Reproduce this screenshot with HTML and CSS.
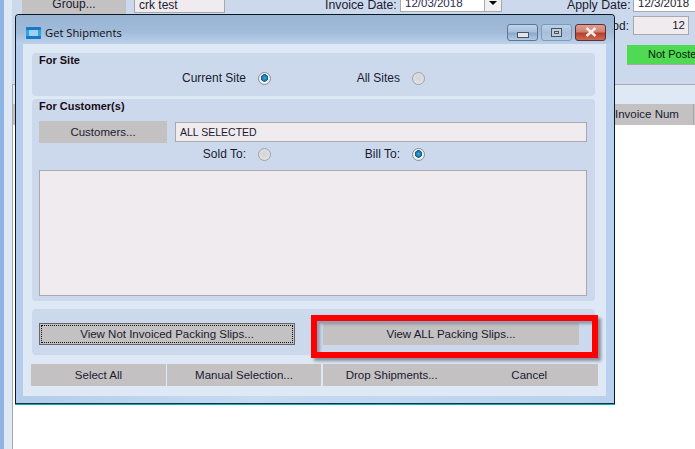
FILE: index.html
```html
<!DOCTYPE html>
<html lang="en">
<head>
    <meta charset="UTF-8">
    <title>Get Shipments</title>
    <link rel="stylesheet" href="styles.css">
</head>
<body>
    <div class="app">
        <div class="strip"></div>

        <!-- Invoice form behind the dialog -->
        <div class="main">
            <div class="form-area">
                <div class="form-row-top">
                    <div class="btn group-btn">Group...</div>
                    <div class="field name-field">crk test</div>
                    <div class="form-label invoice-label">Invoice Date:</div>
                    <div class="field date-field">
                        <span class="date-text">12/03/2018</span>
                        <span class="date-arrow"></span>
                    </div>
                    <div class="form-label apply-label">Apply Date:</div>
                    <div class="field apply-field">12/3/2018</div>
                </div>
                <div class="form-row-period">
                    <div class="form-label">Period:</div>
                    <div class="field period-field">12</div>
                </div>
                <div class="status">Not Posted</div>
            </div>
            <div class="band"></div>
            <div class="grid-head">
                <div class="grid-col">Invoice Num</div>
            </div>
        </div>

        <!-- Dialog -->
        <div class="dialog">
            <div class="titlebar">
                <svg class="title-icon" width="15" height="12" viewBox="0 0 15 12">
                    <rect x="0" y="0" width="15" height="12" rx="2" fill="#2fa3de"/>
                    <rect x="0" y="0" width="15" height="3" rx="1" fill="#1878c8"/>
                    <rect x="0" y="9" width="15" height="3" rx="1" fill="#1878c8"/>
                    <rect x="3" y="3" width="9" height="6" fill="#9fd0ef"/>
                </svg>
                <span class="title-text">Get Shipments</span>
                <div class="win-buttons">
                    <div class="win-btn"><span class="min-glyph"></span></div>
                    <div class="win-btn win-btn-max"><span class="max-glyph"></span></div>
                    <div class="win-btn win-btn-close">
                        <svg width="12" height="10" viewBox="0 0 12 10">
                            <path d="M1.5 1 L10.5 9 M10.5 1 L1.5 9" stroke="#f3eeee" stroke-width="2.6" fill="none"/>
                        </svg>
                    </div>
                </div>
            </div>

            <div class="client">
                <div class="panel panel-site">
                    <div class="panel-title">For Site</div>
                    <div class="radio-row site-row">
                        <div class="radio-opt">Current Site <span class="radio checked"></span></div>
                        <div class="radio-opt">All Sites <span class="radio"></span></div>
                    </div>
                </div>

                <div class="panel panel-customer">
                    <div class="panel-title">For Customer(s)</div>
                    <div class="customer-row">
                        <div class="btn customers-btn">Customers...</div>
                        <div class="field customers-field">ALL SELECTED</div>
                    </div>
                    <div class="radio-row sold-row">
                        <div class="radio-opt">Sold To: <span class="radio"></span></div>
                        <div class="radio-opt">Bill To: <span class="radio checked"></span></div>
                    </div>
                    <div class="field customer-list"></div>
                </div>

                <div class="panel panel-view">
                    <div class="btn view-btn view-btn-focus"><span class="focus-ring">View Not Invoiced Packing Slips...</span></div>
                    <div class="btn view-btn">View ALL Packing Slips...</div>
                </div>

                <div class="action-row">
                    <div class="btn action-select">Select All</div>
                    <div class="btn action-manual">Manual Selection...</div>
                    <div class="action-pair">
                        <div class="btn">Drop Shipments...</div>
                        <div class="btn">Cancel</div>
                    </div>
                </div>
            </div>
        </div>

        <!-- Red annotation box -->
        <div class="highlight"></div>
    </div>
</body>
</html>
```

FILE: styles.css
```css
* {
    box-sizing: border-box;
    margin: 0;
    padding: 0;
}

body {
    width: 695px;
    height: 449px;
    overflow: hidden;
    background: #ffffff;
    font-family: "Liberation Sans", Arial, sans-serif;
    font-size: 11.5px;
    color: #1b1b30;
}

.app {
    position: relative;
    display: flex;
    width: 695px;
    height: 449px;
    overflow: hidden;
}

.strip {
    width: 12px;
    flex: none;
    background: #dfe9f5;
    border-left: 4px solid #8fb4e4;
}

.main {
    flex: 1;
    min-width: 0;
}

/* Background form */
.form-area {
    height: 84px;
    background: #ccd9ec;
    font-size: 12px;
}

.form-row-top {
    display: flex;
    align-items: flex-end;
    height: 14px;
    overflow: hidden;
    padding-left: 10px;
}

.form-row-top > * {
    flex: none;
}

.form-label {
    white-space: nowrap;
}

.btn {
    display: flex;
    align-items: center;
    justify-content: center;
    background: #c3c1c2;
    white-space: nowrap;
}

.field {
    background: #f0ebef;
    border: 1px solid #a9a9ab;
    white-space: nowrap;
}

.group-btn {
    width: 104px;
    height: 20px;
    font-size: 12px;
}

.name-field {
    width: 91px;
    height: 24px;
    margin-left: 8px;
    margin-bottom: 1px;
    padding: 8px 4px 0;
}

.invoice-label {
    margin-left: 100px;
    width: 75px;
    margin-bottom: 2px;
    font-size: 12.3px;
}

.date-field {
    display: flex;
    justify-content: space-between;
    width: 102px;
    height: 24px;
    margin-bottom: 2px;
    padding: 8px 0 0 4px;
    background: #ffffff;
    font-size: 11.5px;
}

.date-text {
    color: #2a2a50;
}

.date-arrow {
    position: relative;
    width: 17px;
    margin-top: -8px;
    background: #f0f0f0;
    border-left: 1px solid #a9a9ab;
}

.date-arrow::after {
    content: '';
    position: absolute;
    left: 4px;
    top: 12px;
    border-left: 4px solid transparent;
    border-right: 4px solid transparent;
    border-top: 4px solid #000000;
}

.apply-label {
    margin-left: 65px;
    width: 66px;
    margin-bottom: 2px;
    font-size: 12.3px;
}

.apply-field {
    width: 70px;
    height: 24px;
    margin-bottom: 2px;
    padding: 8px 4px 0;
    background: #ffffff;
    font-size: 11.5px;
}

.form-row-period {
    display: flex;
    justify-content: flex-end;
    align-items: center;
    gap: 4px;
    margin-top: 2px;
    padding-right: 6px;
}

.period-field {
    width: 56px;
    height: 19px;
    padding: 2px 3px;
    text-align: right;
    font-size: 11.5px;
}

.status {
    width: 75px;
    height: 20px;
    margin: 10px -7px 0 auto;
    padding: 3px 0 0 21px;
    background: #50da53;
    border-bottom: 1px solid #a9a9ab;
    white-space: nowrap;
    overflow: hidden;
    color: #08200a;
    font-size: 11px;
}

.band {
    height: 20px;
    background: #dfe9f5;
    border-top: 1px solid #a9a9ab;
    border-left: 1px solid #a9a9ab;
}

.grid-head {
    display: flex;
    justify-content: flex-end;
    height: 21px;
    background: #c3c1c2;
    border-left: 1px solid #a9a9ab;
}

.grid-col {
    width: 81px;
    padding: 4px 0 0 2px;
    font-size: 11.5px;
    border-right: 1px solid #a9a9ab;
    margin-right: 1px;
    white-space: nowrap;
}

.main::after {
    content: '';
    display: block;
    height: 324px;
    border-left: 1px solid #a9a9ab;
}

/* Dialog window */
.dialog {
    position: absolute;
    left: 15px;
    top: 14px;
    width: 600px;
    height: 390px;
    display: flex;
    flex-direction: column;
    background: linear-gradient(to right, #b4cdec, #c6daf1 40%, #b9d1ee);
    border: 1px solid #0b1a22;
    border-bottom-color: #063a44;
    border-radius: 4px 4px 0 0;
    box-shadow: 0 1px 0 #1aa5b8;
}

.titlebar {
    display: flex;
    align-items: center;
    height: 29px;
    flex: none;
    padding-left: 10px;
    background: linear-gradient(to bottom, #9ab5d4, #a0bad8 55%, #bad0ea);
    border-radius: 3px 3px 0 0;
}

.title-icon {
    margin-top: 6px;
}

.title-text {
    margin-left: 4px;
    margin-top: 5px;
    font-family: "Open Sans", sans-serif;
    font-size: 11.2px;
    color: #0e0e14;
}

.win-buttons {
    display: flex;
    gap: 3px;
    margin-left: auto;
    margin-top: 5px;
    padding-right: 8px;
}

.win-btn {
    display: flex;
    align-items: center;
    justify-content: center;
    width: 31px;
    height: 17px;
    background: linear-gradient(to bottom, #c1d3e9 0%, #a9c0dc 45%, #8ba9cb 55%, #b4cae3 100%);
    border: 1px solid #5e7490;
    border-radius: 3px;
}

.win-btn-max {
    border-color: #7f99b8;
    background: linear-gradient(to bottom, #bdd0e7, #a8bfdc 50%, #b2c8e2);
}

.win-btn-close {
    background: linear-gradient(to bottom, #dfa090 0%, #d08070 45%, #b5402c 55%, #cd6a55 100%);
    border-color: #5e2f34;
}

.min-glyph {
    width: 12px;
    height: 6px;
    margin-top: 5px;
    background: #e2e4e8;
    border: 1px solid #44556a;
}

.max-glyph {
    width: 11px;
    height: 9px;
    background: #c9d2dc;
    border: 1px solid #44556a;
    box-shadow: inset 0 0 0 2px #c4ccd6, inset 0 0 0 3px #44556a;
}

.client {
    flex: 1;
    margin: 0 8px 7px 7px;
    padding: 9px 8px 10px;
    background: #dfe9f5;
}

.panel {
    margin: 0 3px 0 1px;
    background: #ccd9ec;
    border-radius: 4px;
}

.panel-title {
    padding-left: 7px;
    line-height: 14px;
    font-size: 11px;
    font-weight: bold;
    color: #180c14;
}

.panel-site {
    height: 43px;
}

.panel-customer {
    height: 202px;
    margin-top: 3px;
}

.radio-row {
    display: grid;
    grid-template-columns: 239px 154px;
    font-size: 12px;
    line-height: 14px;
}

.site-row {
    margin-top: 4px;
}

.sold-row {
    margin-top: 4px;
}

.radio-opt {
    display: flex;
    justify-content: flex-end;
    align-items: center;
    gap: 12px;
}

.radio {
    width: 13px;
    height: 13px;
    flex: none;
    border-radius: 50%;
    border: 1px solid #a0a2a5;
    background: radial-gradient(circle at 50% 45%, #d2d3d6 0, #dfe0e3 65%, #fafafa 100%);
}

.radio.checked {
    border-color: #8d8f92;
    background: radial-gradient(circle at 50% 45%, #3fb0e4 0, #0a5f92 3.5px, #f0f0f0 4px, #e4e4e6 100%);
}

.customer-row {
    display: flex;
    align-items: center;
    gap: 8px;
    height: 22px;
    margin: 8px 8px 0 7px;
}

.customers-btn {
    width: 128px;
    height: 22px;
}

.customers-field {
    flex: 1;
    height: 20px;
    padding: 3px 4px;
    font-size: 10.5px;
}

.customer-list {
    height: 126px;
    margin: 9px 8px 0 7px;
}

.panel-view {
    display: flex;
    gap: 28px;
    height: 46px;
    margin-top: 8px;
    padding: 14px 0 0 7px;
}

.view-btn {
    width: 256px;
    height: 22px;
}

.view-btn-focus {
    border: 1px solid #66666a;
    padding: 1px;
}

.focus-ring {
    display: flex;
    align-items: center;
    justify-content: center;
    width: 100%;
    height: 100%;
    border: 1px dotted #111111;
}

.action-row {
    display: flex;
    height: 22px;
    margin-top: 9px;
}

.action-select {
    width: 135px;
}

.action-manual {
    width: 154px;
    margin: 0 2px 0 1px;
}

.action-pair {
    display: flex;
    flex: 1;
}

.action-pair .btn {
    flex: 1;
}

/* Annotation */
.highlight {
    position: absolute;
    left: 311px;
    top: 315px;
    width: 287px;
    height: 43px;
    border: 6px solid #fe0000;
    box-shadow: 3px 3px 3px rgba(70, 80, 100, 0.6), inset 3px 3px 3px rgba(70, 80, 100, 0.45);
}
```
